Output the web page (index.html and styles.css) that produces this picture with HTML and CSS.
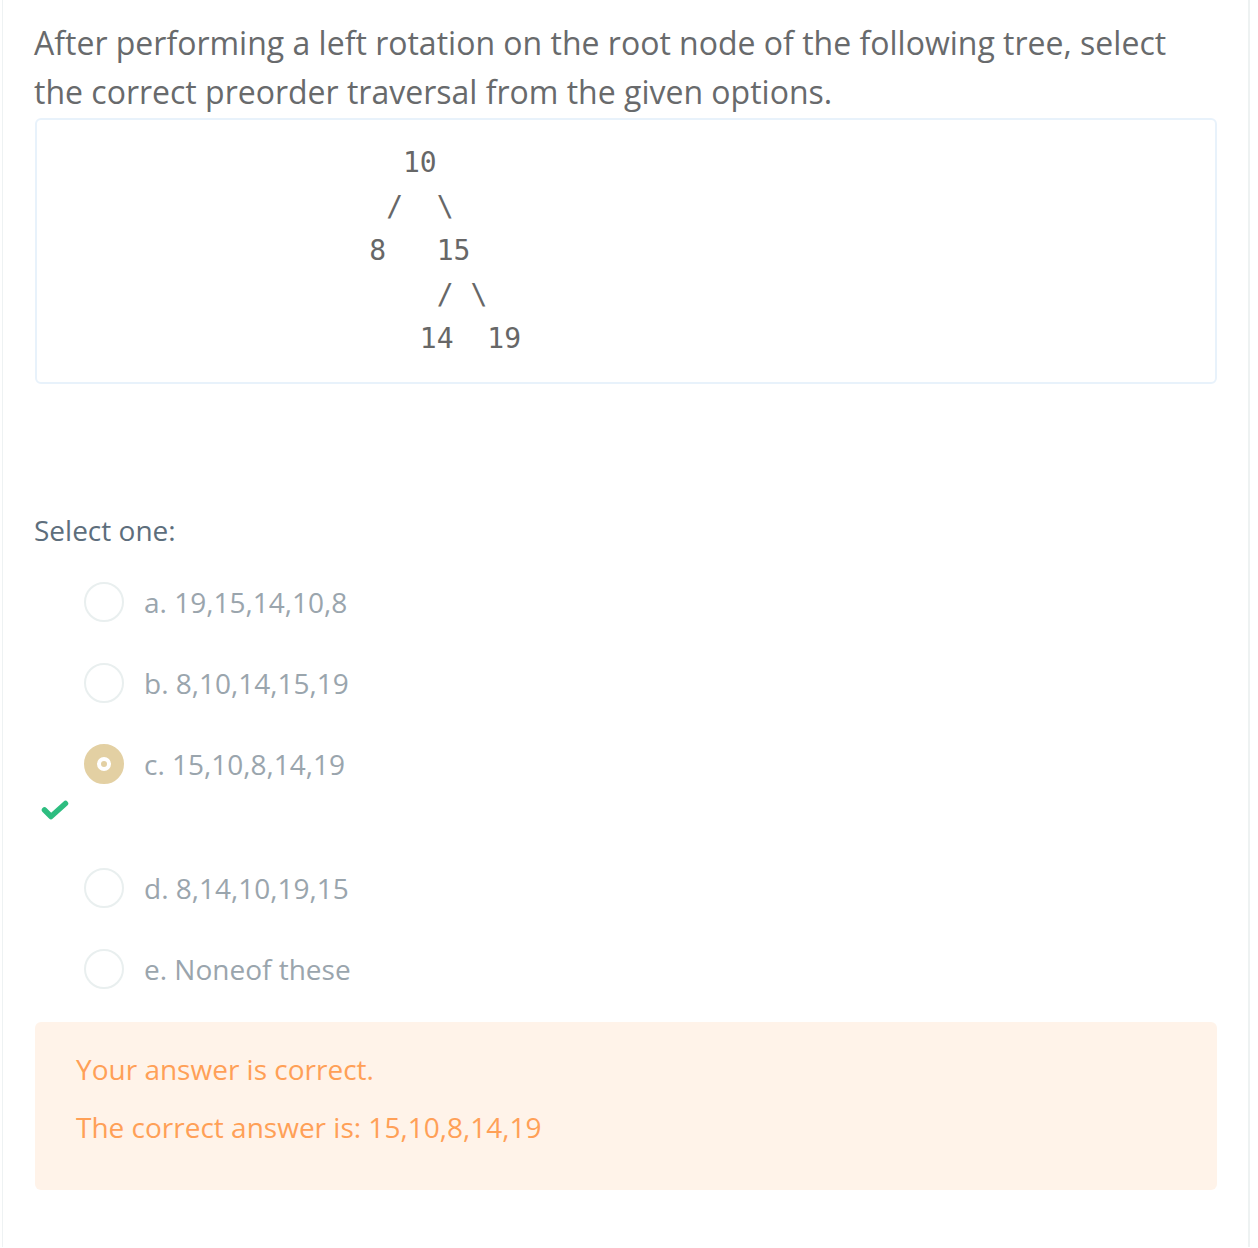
FILE: index.html
```html
<!DOCTYPE html>
<html lang="en">
<head>
<meta charset="utf-8">
<title>Question</title>
<link rel="stylesheet" href="styles.css">
</head>
<body>
<div class="page">
  <div class="qtext">After performing a left rotation on the root node of the following tree, select the correct preorder traversal from the given options.</div>
  <pre class="tree">                     10
                    /  \
                   8   15
                       / \
                      14  19</pre>
  <div class="prompt">Select one:</div>
  <div class="answers">
    <div class="option"><span class="radio"></span><span class="label">a. 19,15,14,10,8</span></div>
    <div class="option"><span class="radio"></span><span class="label">b. 8,10,14,15,19</span></div>
    <div class="option"><span class="radio checked"><span class="dot"></span></span><span class="label">c. 15,10,8,14,19</span></div>
    <div class="mark">
      <svg class="check" width="28" height="21" viewBox="0 0 28 21"><path d="M3.5 10 L10 16.5 L24.5 3.5" fill="none" stroke="#2dbd80" stroke-width="5.5" stroke-linecap="round" stroke-linejoin="round"/></svg>
    </div>
    <div class="option"><span class="radio"></span><span class="label">d. 8,14,10,19,15</span></div>
    <div class="option"><span class="radio"></span><span class="label">e. Noneof these</span></div>
  </div>
  <div class="feedback">
    <p>Your answer is correct.</p>
    <p>The correct answer is: 15,10,8,14,19</p>
  </div>
</div>
</body>
</html>
```
FILE: styles.css
```css
html, body {
  margin: 0;
  padding: 0;
  background: #ffffff;
}
.page {
  margin: 0 8px 0 2px;
  border-left: 1px solid #eef2f3;
  border-right: 2px solid #eef2f2;
  padding: 18px 31px 57px 31px;
  min-height: 1171px;
  font-family: "Open Sans", "Liberation Sans", sans-serif;
}
.qtext {
  font-size: 32px;
  line-height: 49px;
  color: #686a6c;
}
.tree {
  margin: 2px 0 0 1px;
  border: 2px solid #e8f2fb;
  border-radius: 6px;
  padding: 21px 12px 21px 12px;
  font-family: "DejaVu Sans Mono", monospace;
  font-size: 28px;
  line-height: 44px;
  color: #676767;
}
.prompt {
  margin-top: 126px;
  font-size: 28px;
  line-height: 40px;
  color: #5d6e7c;
}
.answers {
  margin-top: 32px;
}
.option {
  display: flex;
  align-items: center;
  gap: 20px;
  height: 40px;
  margin-left: 50px;
  margin-bottom: 41px;
}
.radio {
  box-sizing: border-box;
  width: 40px;
  height: 40px;
  border-radius: 50%;
  border: 2px solid #e9efef;
  display: flex;
  align-items: center;
  justify-content: center;
  flex: none;
}
.radio.checked {
  background: #e3d0a3;
  border-color: #e3d0a3;
}
.dot {
  width: 6px;
  height: 6px;
  border-radius: 50%;
  background: #e3d0a3;
  border: 4px solid #ffffff;
}
.label {
  font-size: 28px;
  line-height: 40px;
  color: #9aa5ad;
}
.mark {
  height: 43px;
  box-sizing: border-box;
  padding: 16px 0 0 7px;
  margin-top: -41px;
  margin-bottom: 41px;
}
.check {
  display: block;
}
.feedback {
  margin-top: -8px;
  margin-left: 1px;
  background: #fff3e9;
  border-radius: 6px;
  padding: 27px 41px 25px 41px;
}
.feedback p {
  margin: 0 0 18px 0;
  font-size: 28px;
  line-height: 40px;
  color: #ffa057;
}
```
